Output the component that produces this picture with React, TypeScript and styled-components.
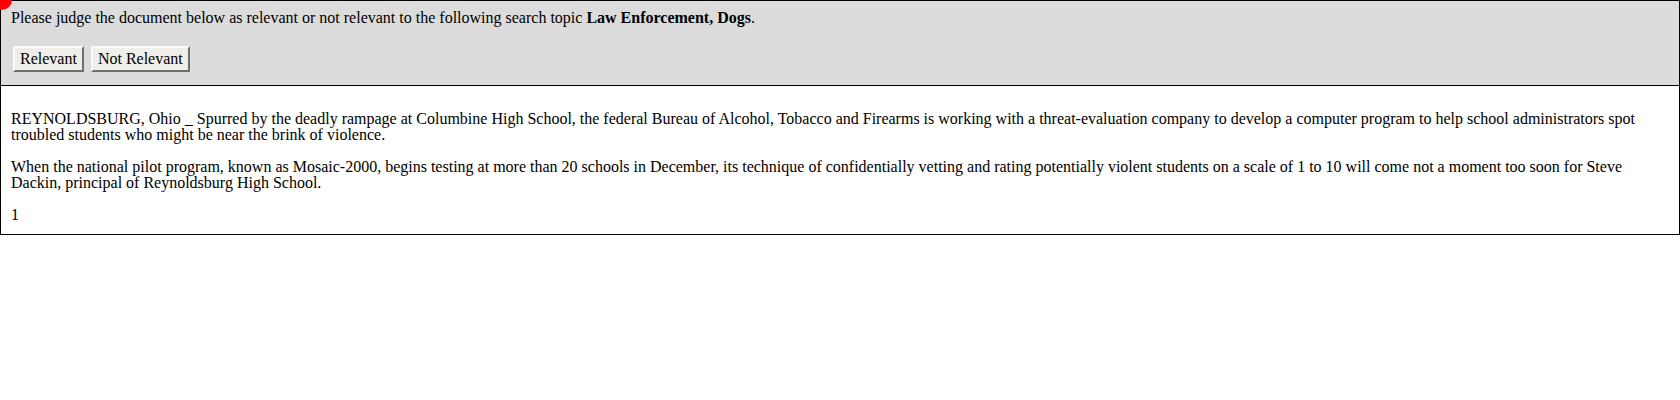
import React from "react";
import styled, { createGlobalStyle } from "styled-components";

const GlobalStyle = createGlobalStyle`
  html, body {
    margin: 0;
    padding: 0;
    background: #ffffff;
  }

  body {
    font-family: "Liberation Serif", "Times New Roman", serif;
    font-size: 16px;
    line-height: 16px;
    color: #000;
  }
`;

const Page = styled.div`
  position: relative;
  border: 1px solid #000;
`;

const Marker = styled.div`
  position: absolute;
  z-index: 2;
  top: -11px;
  left: -10px;
  width: 21px;
  height: 20px;
  border-radius: 50%;
  background: #ff0000;
`;

const JudgePanel = styled.div`
  background: #dcdcdc;
  border-bottom: 1px solid #000;
  padding: 9px 10px 13px;
`;

const Prompt = styled.div`
  margin: 0 0 20px;
`;

const ButtonRow = styled.div`
  display: flex;
  gap: 7px;
  padding-left: 2px;
`;

const JudgeButton = styled.button`
  font-family: "Liberation Serif", "Times New Roman", serif;
  font-size: 16px;
  line-height: 18px;
  color: #000;
  background: #f0eee9;
  border: 2px solid;
  border-color: #fbfaf8 #6e6e6e #6e6e6e #fbfaf8;
  border-radius: 0;
  padding: 2px 5px;
  margin: 0;
  cursor: pointer;
`;

const Article = styled.div`
  padding: 25px 10px 11px;
  background: #fff;
`;

const Paragraph = styled.p`
  margin: 0 0 16px;

  &:last-child {
    margin-bottom: 0;
  }
`;

export default function App() {
  return (
    <>
      <GlobalStyle />
      <Page>
        <Marker />
        <JudgePanel>
          <Prompt>
            Please judge the document below as relevant or not relevant to the
            following search topic <b>Law Enforcement, Dogs</b>.
          </Prompt>
          <ButtonRow>
            <JudgeButton type="button">Relevant</JudgeButton>
            <JudgeButton type="button">Not Relevant</JudgeButton>
          </ButtonRow>
        </JudgePanel>
        <Article>
          <Paragraph>
            REYNOLDSBURG, Ohio _ Spurred by the deadly rampage at Columbine High
            School, the federal Bureau of Alcohol, Tobacco and Firearms is
            working with a threat-evaluation company to develop a computer
            program to help school administrators spot troubled students who
            might be near the brink of violence.
          </Paragraph>
          <Paragraph>
            When the national pilot program, known as Mosaic-2000, begins
            testing at more than 20 schools in December, its technique of
            confidentially vetting and rating potentially violent students on a
            scale of 1 to 10 will come not a moment too soon for Steve Dackin,
            principal of Reynoldsburg High School.
          </Paragraph>
          <Paragraph>1</Paragraph>
        </Article>
      </Page>
    </>
  );
}
